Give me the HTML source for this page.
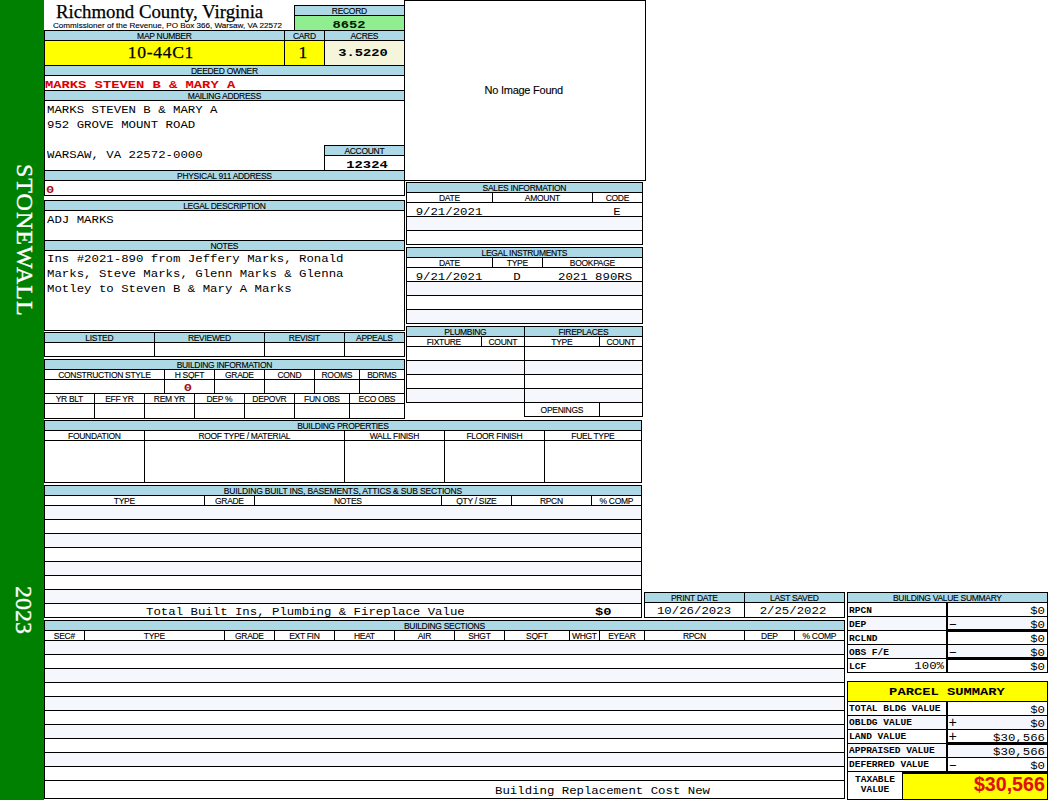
<!DOCTYPE html>
<html lang="en"><head><meta charset="utf-8"><title>Richmond County, Virginia - Property Card</title><style>
html,body{margin:0;padding:0;background:#fff;}
#p{position:relative;width:1050px;height:800px;overflow:hidden;background:#fff;}
.b,.f,.t{position:absolute;box-sizing:border-box;}
.b{border:1px solid #000;}
.t{white-space:pre;color:#000;}
.sans{font-family:"Liberation Sans",Arial,sans-serif;-webkit-text-stroke:0.12px currentColor;}
.serif{font-family:"Liberation Serif","Times New Roman",serif;-webkit-text-stroke:0.25px currentColor;}
.mono{font-family:"Liberation Mono","Courier New",monospace;}
.v{writing-mode:vertical-rl;font-family:"Liberation Serif","Times New Roman",serif;color:#fff;line-height:26px;width:26px;-webkit-text-stroke:0.35px #fff;}
</style></head><body><div id="p">
<div class="f" style="left:0px;top:0px;width:44px;height:800px;background:#008000;"></div>
<div class="b" style="left:404px;top:0px;width:242px;height:181px;background:#fff;"></div>
<div class="t sans" style="top:81.60px;line-height:16px;height:16px;font-size:11px;letter-spacing:-0.25px;left:423.90px;width:200px;text-align:center;text-indent:-0.25px;">No Image Found</div>
<div class="t serif" style="top:-1.50px;line-height:26px;height:26px;font-size:18.8px;left:56px;">Richmond County, Virginia</div>
<div class="t sans" style="top:19.00px;line-height:13px;height:13px;font-size:8.1px;left:53px;">Commissioner of the Revenue, PO Box 366, Warsaw, VA 22572</div>
<div class="b" style="left:294px;top:5px;width:111px;height:11px;background:#add8e6;"></div>
<div class="t sans" style="top:5.10px;line-height:13px;height:13px;font-size:8.5px;letter-spacing:-0.3px;left:284.50px;width:130px;text-align:center;text-indent:-0.3px;">RECORD</div>
<div class="b" style="left:294px;top:15px;width:111px;height:16px;background:#90ee90;"></div>
<div class="t mono" style="top:17.45px;line-height:17px;height:17px;font-size:11.8px;font-weight:bold;color:#001a00;transform:scaleX(1.1681);transform-origin:50% 0;left:299.00px;width:100px;text-align:center;">8652</div>
<div class="b" style="left:44px;top:30px;width:241px;height:11px;background:#add8e6;"></div>
<div class="t sans" style="top:30.10px;line-height:13px;height:13px;font-size:8.5px;letter-spacing:-0.3px;left:34.50px;width:260px;text-align:center;text-indent:-0.3px;">MAP NUMBER</div>
<div class="b" style="left:284px;top:30px;width:41px;height:11px;background:#add8e6;"></div>
<div class="t sans" style="top:30.10px;line-height:13px;height:13px;font-size:8.5px;letter-spacing:-0.3px;left:274.50px;width:60px;text-align:center;text-indent:-0.3px;">CARD</div>
<div class="b" style="left:324px;top:30px;width:81px;height:11px;background:#add8e6;"></div>
<div class="t sans" style="top:30.10px;line-height:13px;height:13px;font-size:8.5px;letter-spacing:-0.3px;left:314.50px;width:100px;text-align:center;text-indent:-0.3px;">ACRES</div>
<div class="b" style="left:44px;top:40px;width:241px;height:26px;background:#ffff00;"></div>
<div class="b" style="left:284px;top:40px;width:41px;height:26px;background:#ffff00;"></div>
<div class="b" style="left:324px;top:40px;width:81px;height:26px;background:#f5f5dc;"></div>
<div class="t serif" style="top:40.20px;line-height:25px;height:25px;font-size:17.6px;letter-spacing:0.65px;left:60.60px;width:200px;text-align:center;text-indent:0.65px;">10-44C1</div>
<div class="t serif" style="top:40.20px;line-height:25px;height:25px;font-size:17.6px;left:283.00px;width:40px;text-align:center;">1</div>
<div class="t mono" style="top:44.95px;line-height:17px;height:17px;font-size:11.8px;font-weight:bold;transform:scaleX(1.1681);transform-origin:50% 0;left:322.60px;width:80px;text-align:center;">3.5220</div>
<div class="b" style="left:44px;top:65px;width:361px;height:11px;background:#add8e6;"></div>
<div class="t sans" style="top:65.10px;line-height:13px;height:13px;font-size:8.5px;letter-spacing:-0.3px;left:34.50px;width:380px;text-align:center;text-indent:-0.3px;">DEEDED OWNER</div>
<div class="b" style="left:44px;top:75px;width:361px;height:16px;background:#fff;"></div>
<div class="t mono" style="top:77.25px;line-height:17px;height:17px;font-size:11.8px;font-weight:bold;color:#dd0000;transform:scaleX(1.1681);transform-origin:0 0;left:44.6px;">MARKS STEVEN B &amp; MARY A</div>
<div class="b" style="left:44px;top:90px;width:361px;height:11px;background:#add8e6;"></div>
<div class="t sans" style="top:90.10px;line-height:13px;height:13px;font-size:8.5px;letter-spacing:-0.3px;left:34.50px;width:380px;text-align:center;text-indent:-0.3px;">MAILING ADDRESS</div>
<div class="b" style="left:44px;top:100px;width:361px;height:71px;background:#fff;"></div>
<div class="t mono" style="top:101.50px;line-height:17px;height:17px;font-size:11.2px;transform:scaleX(1.1042);transform-origin:0 0;left:46.8px;">MARKS STEVEN B &amp; MARY A</div>
<div class="t mono" style="top:116.70px;line-height:17px;height:17px;font-size:11.2px;transform:scaleX(1.1042);transform-origin:0 0;left:46.8px;">952 GROVE MOUNT ROAD</div>
<div class="t mono" style="top:147.00px;line-height:17px;height:17px;font-size:11.2px;transform:scaleX(1.1042);transform-origin:0 0;left:46.8px;">WARSAW, VA 22572-0000</div>
<div class="b" style="left:324px;top:145px;width:81px;height:11px;background:#add8e6;"></div>
<div class="t sans" style="top:145.10px;line-height:13px;height:13px;font-size:8.5px;letter-spacing:-0.3px;left:314.50px;width:100px;text-align:center;text-indent:-0.3px;">ACCOUNT</div>
<div class="b" style="left:324px;top:155px;width:81px;height:16px;background:#fff;"></div>
<div class="t mono" style="top:157.15px;line-height:17px;height:17px;font-size:11.8px;font-weight:bold;transform:scaleX(1.1681);transform-origin:50% 0;left:327.40px;width:80px;text-align:center;">12324</div>
<div class="b" style="left:44px;top:170px;width:361px;height:11px;background:#add8e6;"></div>
<div class="t sans" style="top:170.10px;line-height:13px;height:13px;font-size:8.5px;letter-spacing:-0.3px;left:34.50px;width:380px;text-align:center;text-indent:-0.3px;">PHYSICAL 911 ADDRESS</div>
<div class="b" style="left:44px;top:180px;width:361px;height:16px;background:#fff;"></div>
<div class="t mono" style="top:182.15px;line-height:17px;height:17px;font-size:11.8px;font-weight:bold;color:#a81010;transform:scaleX(1.1681);transform-origin:0 0;left:46.3px;">0</div>
<div class="b" style="left:44px;top:200px;width:361px;height:11px;background:#add8e6;"></div>
<div class="t sans" style="top:200.10px;line-height:13px;height:13px;font-size:8.5px;letter-spacing:-0.3px;left:34.50px;width:380px;text-align:center;text-indent:-0.3px;">LEGAL DESCRIPTION</div>
<div class="b" style="left:44px;top:210px;width:361px;height:31px;background:#fff;"></div>
<div class="t mono" style="top:211.70px;line-height:17px;height:17px;font-size:11.2px;transform:scaleX(1.1042);transform-origin:0 0;left:46.8px;">ADJ MARKS</div>
<div class="b" style="left:44px;top:240px;width:361px;height:11px;background:#add8e6;"></div>
<div class="t sans" style="top:240.10px;line-height:13px;height:13px;font-size:8.5px;letter-spacing:-0.3px;left:34.50px;width:380px;text-align:center;text-indent:-0.3px;">NOTES</div>
<div class="b" style="left:44px;top:250px;width:361px;height:81px;background:#fff;"></div>
<div class="t mono" style="top:251.30px;line-height:17px;height:17px;font-size:11.2px;transform:scaleX(1.1042);transform-origin:0 0;left:46.8px;">Ins #2021-890 from Jeffery Marks, Ronald</div>
<div class="t mono" style="top:266.30px;line-height:17px;height:17px;font-size:11.2px;transform:scaleX(1.1042);transform-origin:0 0;left:46.8px;">Marks, Steve Marks, Glenn Marks &amp; Glenna</div>
<div class="t mono" style="top:281.30px;line-height:17px;height:17px;font-size:11.2px;transform:scaleX(1.1042);transform-origin:0 0;left:46.8px;">Motley to Steven B &amp; Mary A Marks</div>
<div class="b" style="left:44px;top:332px;width:111px;height:11px;background:#add8e6;"></div>
<div class="t sans" style="top:332.10px;line-height:13px;height:13px;font-size:8.5px;letter-spacing:-0.3px;left:34.50px;width:130px;text-align:center;text-indent:-0.3px;">LISTED</div>
<div class="b" style="left:44px;top:342px;width:111px;height:15px;background:#fff;"></div>
<div class="b" style="left:154px;top:332px;width:111px;height:11px;background:#add8e6;"></div>
<div class="t sans" style="top:332.10px;line-height:13px;height:13px;font-size:8.5px;letter-spacing:-0.3px;left:144.50px;width:130px;text-align:center;text-indent:-0.3px;">REVIEWED</div>
<div class="b" style="left:154px;top:342px;width:111px;height:15px;background:#fff;"></div>
<div class="b" style="left:264px;top:332px;width:81px;height:11px;background:#add8e6;"></div>
<div class="t sans" style="top:332.10px;line-height:13px;height:13px;font-size:8.5px;letter-spacing:-0.3px;left:254.50px;width:100px;text-align:center;text-indent:-0.3px;">REVISIT</div>
<div class="b" style="left:264px;top:342px;width:81px;height:15px;background:#fff;"></div>
<div class="b" style="left:344px;top:332px;width:61px;height:11px;background:#add8e6;"></div>
<div class="t sans" style="top:332.10px;line-height:13px;height:13px;font-size:8.5px;letter-spacing:-0.3px;left:334.50px;width:80px;text-align:center;text-indent:-0.3px;">APPEALS</div>
<div class="b" style="left:344px;top:342px;width:61px;height:15px;background:#fff;"></div>
<div class="b" style="left:44px;top:359px;width:361px;height:11px;background:#add8e6;"></div>
<div class="t sans" style="top:359.10px;line-height:13px;height:13px;font-size:8.5px;letter-spacing:-0.3px;left:34.50px;width:380px;text-align:center;text-indent:-0.3px;">BUILDING INFORMATION</div>
<div class="b" style="left:44px;top:369px;width:121px;height:11px;background:#fff;"></div>
<div class="t sans" style="top:369.10px;line-height:13px;height:13px;font-size:8.5px;letter-spacing:-0.3px;left:34.50px;width:140px;text-align:center;text-indent:-0.3px;">CONSTRUCTION STYLE</div>
<div class="b" style="left:44px;top:379px;width:121px;height:15px;background:#fff;"></div>
<div class="b" style="left:164px;top:369px;width:51px;height:11px;background:#fff;"></div>
<div class="t sans" style="top:369.10px;line-height:13px;height:13px;font-size:8.5px;letter-spacing:-0.3px;left:154.50px;width:70px;text-align:center;text-indent:-0.3px;">H SQFT</div>
<div class="b" style="left:164px;top:379px;width:51px;height:15px;background:#fff;"></div>
<div class="b" style="left:214px;top:369px;width:51px;height:11px;background:#fff;"></div>
<div class="t sans" style="top:369.10px;line-height:13px;height:13px;font-size:8.5px;letter-spacing:-0.3px;left:204.50px;width:70px;text-align:center;text-indent:-0.3px;">GRADE</div>
<div class="b" style="left:214px;top:379px;width:51px;height:15px;background:#fff;"></div>
<div class="b" style="left:264px;top:369px;width:51px;height:11px;background:#fff;"></div>
<div class="t sans" style="top:369.10px;line-height:13px;height:13px;font-size:8.5px;letter-spacing:-0.3px;left:254.50px;width:70px;text-align:center;text-indent:-0.3px;">COND</div>
<div class="b" style="left:264px;top:379px;width:51px;height:15px;background:#fff;"></div>
<div class="b" style="left:314px;top:369px;width:46px;height:11px;background:#fff;"></div>
<div class="t sans" style="top:369.10px;line-height:13px;height:13px;font-size:8.5px;letter-spacing:-0.3px;left:304.50px;width:65px;text-align:center;text-indent:-0.3px;">ROOMS</div>
<div class="b" style="left:314px;top:379px;width:46px;height:15px;background:#fff;"></div>
<div class="b" style="left:359px;top:369px;width:46px;height:11px;background:#fff;"></div>
<div class="t sans" style="top:369.10px;line-height:13px;height:13px;font-size:8.5px;letter-spacing:-0.3px;left:349.50px;width:65px;text-align:center;text-indent:-0.3px;">BDRMS</div>
<div class="b" style="left:359px;top:379px;width:46px;height:15px;background:#fff;"></div>
<div class="t mono" style="top:380.15px;line-height:17px;height:17px;font-size:11.8px;font-weight:bold;color:#a81010;transform:scaleX(1.1681);transform-origin:50% 0;left:168.20px;width:40px;text-align:center;">0</div>
<div class="b" style="left:44px;top:393px;width:51px;height:11px;background:#fff;"></div>
<div class="t sans" style="top:393.10px;line-height:13px;height:13px;font-size:8.5px;letter-spacing:-0.3px;left:34.50px;width:70px;text-align:center;text-indent:-0.3px;">YR BLT</div>
<div class="b" style="left:44px;top:403px;width:51px;height:16px;background:#fff;"></div>
<div class="b" style="left:94px;top:393px;width:51px;height:11px;background:#fff;"></div>
<div class="t sans" style="top:393.10px;line-height:13px;height:13px;font-size:8.5px;letter-spacing:-0.3px;left:84.50px;width:70px;text-align:center;text-indent:-0.3px;">EFF YR</div>
<div class="b" style="left:94px;top:403px;width:51px;height:16px;background:#fff;"></div>
<div class="b" style="left:144px;top:393px;width:51px;height:11px;background:#fff;"></div>
<div class="t sans" style="top:393.10px;line-height:13px;height:13px;font-size:8.5px;letter-spacing:-0.3px;left:134.50px;width:70px;text-align:center;text-indent:-0.3px;">REM YR</div>
<div class="b" style="left:144px;top:403px;width:51px;height:16px;background:#fff;"></div>
<div class="b" style="left:194px;top:393px;width:51px;height:11px;background:#fff;"></div>
<div class="t sans" style="top:393.10px;line-height:13px;height:13px;font-size:8.5px;letter-spacing:-0.3px;left:184.50px;width:70px;text-align:center;text-indent:-0.3px;">DEP %</div>
<div class="b" style="left:194px;top:403px;width:51px;height:16px;background:#fff;"></div>
<div class="b" style="left:244px;top:393px;width:51px;height:11px;background:#fff;"></div>
<div class="t sans" style="top:393.10px;line-height:13px;height:13px;font-size:8.5px;letter-spacing:-0.3px;left:234.50px;width:70px;text-align:center;text-indent:-0.3px;">DEPOVR</div>
<div class="b" style="left:244px;top:403px;width:51px;height:16px;background:#fff;"></div>
<div class="b" style="left:294px;top:393px;width:56px;height:11px;background:#fff;"></div>
<div class="t sans" style="top:393.10px;line-height:13px;height:13px;font-size:8.5px;letter-spacing:-0.3px;left:284.50px;width:75px;text-align:center;text-indent:-0.3px;">FUN OBS</div>
<div class="b" style="left:294px;top:403px;width:56px;height:16px;background:#fff;"></div>
<div class="b" style="left:349px;top:393px;width:56px;height:11px;background:#fff;"></div>
<div class="t sans" style="top:393.10px;line-height:13px;height:13px;font-size:8.5px;letter-spacing:-0.3px;left:339.50px;width:75px;text-align:center;text-indent:-0.3px;">ECO OBS</div>
<div class="b" style="left:349px;top:403px;width:56px;height:16px;background:#fff;"></div>
<div class="b" style="left:44px;top:420px;width:598px;height:11px;background:#add8e6;"></div>
<div class="t sans" style="top:420.10px;line-height:13px;height:13px;font-size:8.5px;letter-spacing:-0.3px;left:34.50px;width:617px;text-align:center;text-indent:-0.3px;">BUILDING PROPERTIES</div>
<div class="b" style="left:44px;top:430px;width:101px;height:11px;background:#fff;"></div>
<div class="t sans" style="top:430.10px;line-height:13px;height:13px;font-size:8.5px;letter-spacing:-0.3px;left:34.50px;width:120px;text-align:center;text-indent:-0.3px;">FOUNDATION</div>
<div class="b" style="left:44px;top:440px;width:101px;height:43px;background:#fff;"></div>
<div class="b" style="left:144px;top:430px;width:201px;height:11px;background:#fff;"></div>
<div class="t sans" style="top:430.10px;line-height:13px;height:13px;font-size:8.5px;letter-spacing:-0.3px;left:134.50px;width:220px;text-align:center;text-indent:-0.3px;">ROOF TYPE / MATERIAL</div>
<div class="b" style="left:144px;top:440px;width:201px;height:43px;background:#fff;"></div>
<div class="b" style="left:344px;top:430px;width:101px;height:11px;background:#fff;"></div>
<div class="t sans" style="top:430.10px;line-height:13px;height:13px;font-size:8.5px;letter-spacing:-0.3px;left:334.50px;width:120px;text-align:center;text-indent:-0.3px;">WALL FINISH</div>
<div class="b" style="left:344px;top:440px;width:101px;height:43px;background:#fff;"></div>
<div class="b" style="left:444px;top:430px;width:101px;height:11px;background:#fff;"></div>
<div class="t sans" style="top:430.10px;line-height:13px;height:13px;font-size:8.5px;letter-spacing:-0.3px;left:434.50px;width:120px;text-align:center;text-indent:-0.3px;">FLOOR FINISH</div>
<div class="b" style="left:444px;top:440px;width:101px;height:43px;background:#fff;"></div>
<div class="b" style="left:544px;top:430px;width:98px;height:11px;background:#fff;"></div>
<div class="t sans" style="top:430.10px;line-height:13px;height:13px;font-size:8.5px;letter-spacing:-0.3px;left:534.50px;width:117px;text-align:center;text-indent:-0.3px;">FUEL TYPE</div>
<div class="b" style="left:544px;top:440px;width:98px;height:43px;background:#fff;"></div>
<div class="b" style="left:44px;top:485px;width:598px;height:11px;background:#add8e6;"></div>
<div class="t sans" style="top:485.10px;line-height:13px;height:13px;font-size:8.5px;letter-spacing:-0.17px;left:34.50px;width:617px;text-align:center;text-indent:-0.17px;">BUILDING BUILT INS, BASEMENTS, ATTICS &amp; SUB SECTIONS</div>
<div class="b" style="left:44px;top:495px;width:161px;height:11px;background:#fff;"></div>
<div class="t sans" style="top:495.10px;line-height:13px;height:13px;font-size:8.5px;letter-spacing:-0.3px;left:34.50px;width:180px;text-align:center;text-indent:-0.3px;">TYPE</div>
<div class="b" style="left:204px;top:495px;width:51px;height:11px;background:#fff;"></div>
<div class="t sans" style="top:495.10px;line-height:13px;height:13px;font-size:8.5px;letter-spacing:-0.3px;left:194.50px;width:70px;text-align:center;text-indent:-0.3px;">GRADE</div>
<div class="b" style="left:254px;top:495px;width:188px;height:11px;background:#fff;"></div>
<div class="t sans" style="top:495.10px;line-height:13px;height:13px;font-size:8.5px;letter-spacing:-0.3px;left:244.50px;width:207px;text-align:center;text-indent:-0.3px;">NOTES</div>
<div class="b" style="left:441px;top:495px;width:71px;height:11px;background:#fff;"></div>
<div class="t sans" style="top:495.10px;line-height:13px;height:13px;font-size:8.5px;letter-spacing:-0.3px;left:431.50px;width:90px;text-align:center;text-indent:-0.3px;">QTY / SIZE</div>
<div class="b" style="left:511px;top:495px;width:81px;height:11px;background:#fff;"></div>
<div class="t sans" style="top:495.10px;line-height:13px;height:13px;font-size:8.5px;letter-spacing:-0.3px;left:501.50px;width:100px;text-align:center;text-indent:-0.3px;">RPCN</div>
<div class="b" style="left:591px;top:495px;width:51px;height:11px;background:#fff;"></div>
<div class="t sans" style="top:495.10px;line-height:13px;height:13px;font-size:8.5px;letter-spacing:-0.3px;left:581.50px;width:70px;text-align:center;text-indent:-0.3px;">% COMP</div>
<div class="b" style="left:44px;top:505px;width:598px;height:15px;background:#f6f6fd;"></div>
<div class="b" style="left:44px;top:519px;width:598px;height:15px;background:#fff;"></div>
<div class="b" style="left:44px;top:533px;width:598px;height:15px;background:#f6f6fd;"></div>
<div class="b" style="left:44px;top:547px;width:598px;height:15px;background:#fff;"></div>
<div class="b" style="left:44px;top:561px;width:598px;height:15px;background:#f6f6fd;"></div>
<div class="b" style="left:44px;top:575px;width:598px;height:15px;background:#fff;"></div>
<div class="b" style="left:44px;top:589px;width:598px;height:15px;background:#f6f6fd;"></div>
<div class="b" style="left:44px;top:603px;width:598px;height:15px;background:#fff;"></div>
<div class="t mono" style="top:603.50px;line-height:17px;height:17px;font-size:11.2px;transform:scaleX(1.1042);transform-origin:0 0;left:146px;">Total Built Ins, Plumbing &amp; Fireplace Value</div>
<div class="t mono" style="top:603.95px;line-height:17px;height:17px;font-size:11.8px;font-weight:bold;transform:scaleX(1.1681);transform-origin:0 0;left:595.4px;">$0</div>
<div class="b" style="left:44px;top:620px;width:801px;height:11px;background:#add8e6;"></div>
<div class="t sans" style="top:620.10px;line-height:13px;height:13px;font-size:8.5px;letter-spacing:-0.3px;left:34.50px;width:820px;text-align:center;text-indent:-0.3px;">BUILDING SECTIONS</div>
<div class="b" style="left:44px;top:630px;width:41px;height:11px;background:#fff;"></div>
<div class="t sans" style="top:630.10px;line-height:13px;height:13px;font-size:8.5px;letter-spacing:-0.3px;left:34.50px;width:60px;text-align:center;text-indent:-0.3px;">SEC#</div>
<div class="b" style="left:84px;top:630px;width:141px;height:11px;background:#fff;"></div>
<div class="t sans" style="top:630.10px;line-height:13px;height:13px;font-size:8.5px;letter-spacing:-0.3px;left:74.50px;width:160px;text-align:center;text-indent:-0.3px;">TYPE</div>
<div class="b" style="left:224px;top:630px;width:51px;height:11px;background:#fff;"></div>
<div class="t sans" style="top:630.10px;line-height:13px;height:13px;font-size:8.5px;letter-spacing:-0.3px;left:214.50px;width:70px;text-align:center;text-indent:-0.3px;">GRADE</div>
<div class="b" style="left:274px;top:630px;width:61px;height:11px;background:#fff;"></div>
<div class="t sans" style="top:630.10px;line-height:13px;height:13px;font-size:8.5px;letter-spacing:-0.3px;left:264.50px;width:80px;text-align:center;text-indent:-0.3px;">EXT FIN</div>
<div class="b" style="left:334px;top:630px;width:61px;height:11px;background:#fff;"></div>
<div class="t sans" style="top:630.10px;line-height:13px;height:13px;font-size:8.5px;letter-spacing:-0.3px;left:324.50px;width:80px;text-align:center;text-indent:-0.3px;">HEAT</div>
<div class="b" style="left:394px;top:630px;width:61px;height:11px;background:#fff;"></div>
<div class="t sans" style="top:630.10px;line-height:13px;height:13px;font-size:8.5px;letter-spacing:-0.3px;left:384.50px;width:80px;text-align:center;text-indent:-0.3px;">AIR</div>
<div class="b" style="left:454px;top:630px;width:51px;height:11px;background:#fff;"></div>
<div class="t sans" style="top:630.10px;line-height:13px;height:13px;font-size:8.5px;letter-spacing:-0.3px;left:444.50px;width:70px;text-align:center;text-indent:-0.3px;">SHGT</div>
<div class="b" style="left:504px;top:630px;width:66px;height:11px;background:#fff;"></div>
<div class="t sans" style="top:630.10px;line-height:13px;height:13px;font-size:8.5px;letter-spacing:-0.3px;left:494.50px;width:85px;text-align:center;text-indent:-0.3px;">SQFT</div>
<div class="b" style="left:569px;top:630px;width:31px;height:11px;background:#fff;"></div>
<div class="t sans" style="top:630.10px;line-height:13px;height:13px;font-size:8.5px;letter-spacing:-0.3px;left:559.50px;width:50px;text-align:center;text-indent:-0.3px;">WHGT</div>
<div class="b" style="left:599px;top:630px;width:46px;height:11px;background:#fff;"></div>
<div class="t sans" style="top:630.10px;line-height:13px;height:13px;font-size:8.5px;letter-spacing:-0.3px;left:589.50px;width:65px;text-align:center;text-indent:-0.3px;">EYEAR</div>
<div class="b" style="left:644px;top:630px;width:101px;height:11px;background:#fff;"></div>
<div class="t sans" style="top:630.10px;line-height:13px;height:13px;font-size:8.5px;letter-spacing:-0.3px;left:634.50px;width:120px;text-align:center;text-indent:-0.3px;">RPCN</div>
<div class="b" style="left:744px;top:630px;width:51px;height:11px;background:#fff;"></div>
<div class="t sans" style="top:630.10px;line-height:13px;height:13px;font-size:8.5px;letter-spacing:-0.3px;left:734.50px;width:70px;text-align:center;text-indent:-0.3px;">DEP</div>
<div class="b" style="left:794px;top:630px;width:51px;height:11px;background:#fff;"></div>
<div class="t sans" style="top:630.10px;line-height:13px;height:13px;font-size:8.5px;letter-spacing:-0.3px;left:784.50px;width:70px;text-align:center;text-indent:-0.3px;">% COMP</div>
<div class="b" style="left:44px;top:640px;width:801px;height:15px;background:#f6f6fd;"></div>
<div class="b" style="left:44px;top:654px;width:801px;height:15px;background:#fff;"></div>
<div class="b" style="left:44px;top:668px;width:801px;height:15px;background:#f6f6fd;"></div>
<div class="b" style="left:44px;top:682px;width:801px;height:15px;background:#fff;"></div>
<div class="b" style="left:44px;top:696px;width:801px;height:15px;background:#f6f6fd;"></div>
<div class="b" style="left:44px;top:710px;width:801px;height:15px;background:#fff;"></div>
<div class="b" style="left:44px;top:724px;width:801px;height:15px;background:#f6f6fd;"></div>
<div class="b" style="left:44px;top:738px;width:801px;height:15px;background:#fff;"></div>
<div class="b" style="left:44px;top:752px;width:801px;height:15px;background:#f6f6fd;"></div>
<div class="b" style="left:44px;top:766px;width:801px;height:15px;background:#fff;"></div>
<div class="b" style="left:44px;top:780px;width:801px;height:19px;background:#fff;"></div>
<div class="t mono" style="top:783.40px;line-height:17px;height:17px;font-size:11.2px;transform:scaleX(1.1042);transform-origin:0 0;left:495.2px;">Building Replacement Cost New</div>
<div class="b" style="left:406px;top:182px;width:237px;height:11px;background:#add8e6;"></div>
<div class="t sans" style="top:182.10px;line-height:13px;height:13px;font-size:8.5px;letter-spacing:-0.3px;left:396.50px;width:256px;text-align:center;text-indent:-0.3px;">SALES INFORMATION</div>
<div class="b" style="left:406px;top:192px;width:87px;height:11px;background:#fff;"></div>
<div class="t sans" style="top:192.10px;line-height:13px;height:13px;font-size:8.5px;letter-spacing:-0.3px;left:396.50px;width:106px;text-align:center;text-indent:-0.3px;">DATE</div>
<div class="b" style="left:492px;top:192px;width:101px;height:11px;background:#fff;"></div>
<div class="t sans" style="top:192.10px;line-height:13px;height:13px;font-size:8.5px;letter-spacing:-0.3px;left:482.50px;width:120px;text-align:center;text-indent:-0.3px;">AMOUNT</div>
<div class="b" style="left:592px;top:192px;width:51px;height:11px;background:#fff;"></div>
<div class="t sans" style="top:192.10px;line-height:13px;height:13px;font-size:8.5px;letter-spacing:-0.3px;left:582.50px;width:70px;text-align:center;text-indent:-0.3px;">CODE</div>
<div class="b" style="left:406px;top:202px;width:237px;height:15px;background:#fff;"></div>
<div class="b" style="left:406px;top:216px;width:237px;height:15px;background:#f6f6fd;"></div>
<div class="b" style="left:406px;top:230px;width:237px;height:15px;background:#fff;"></div>
<div class="t mono" style="top:203.70px;line-height:17px;height:17px;font-size:11.2px;transform:scaleX(1.1042);transform-origin:50% 0;left:406.00px;width:86px;text-align:center;">9/21/2021</div>
<div class="t mono" style="top:203.70px;line-height:17px;height:17px;font-size:11.2px;transform:scaleX(1.1042);transform-origin:50% 0;left:597.30px;width:40px;text-align:center;">E</div>
<div class="b" style="left:406px;top:247px;width:237px;height:11px;background:#add8e6;"></div>
<div class="t sans" style="top:247.10px;line-height:13px;height:13px;font-size:8.5px;letter-spacing:-0.3px;left:396.50px;width:256px;text-align:center;text-indent:-0.3px;">LEGAL INSTRUMENTS</div>
<div class="b" style="left:406px;top:257px;width:87px;height:11px;background:#fff;"></div>
<div class="t sans" style="top:257.10px;line-height:13px;height:13px;font-size:8.5px;letter-spacing:-0.3px;left:396.50px;width:106px;text-align:center;text-indent:-0.3px;">DATE</div>
<div class="b" style="left:492px;top:257px;width:51px;height:11px;background:#fff;"></div>
<div class="t sans" style="top:257.10px;line-height:13px;height:13px;font-size:8.5px;letter-spacing:-0.3px;left:482.50px;width:70px;text-align:center;text-indent:-0.3px;">TYPE</div>
<div class="b" style="left:542px;top:257px;width:101px;height:11px;background:#fff;"></div>
<div class="t sans" style="top:257.10px;line-height:13px;height:13px;font-size:8.5px;letter-spacing:-0.3px;left:532.50px;width:120px;text-align:center;text-indent:-0.3px;">BOOKPAGE</div>
<div class="b" style="left:406px;top:267px;width:237px;height:15px;background:#fff;"></div>
<div class="b" style="left:406px;top:281px;width:237px;height:15px;background:#f6f6fd;"></div>
<div class="b" style="left:406px;top:295px;width:237px;height:15px;background:#fff;"></div>
<div class="b" style="left:406px;top:309px;width:237px;height:15px;background:#f6f6fd;"></div>
<div class="t mono" style="top:268.70px;line-height:17px;height:17px;font-size:11.2px;transform:scaleX(1.1042);transform-origin:50% 0;left:406.00px;width:86px;text-align:center;">9/21/2021</div>
<div class="t mono" style="top:268.70px;line-height:17px;height:17px;font-size:11.2px;transform:scaleX(1.1042);transform-origin:50% 0;left:497.00px;width:40px;text-align:center;">D</div>
<div class="t mono" style="top:268.70px;line-height:17px;height:17px;font-size:11.2px;transform:scaleX(1.1042);transform-origin:0 0;left:558.2px;">2021 890RS</div>
<div class="b" style="left:406px;top:326px;width:119px;height:11px;background:#add8e6;"></div>
<div class="t sans" style="top:326.10px;line-height:13px;height:13px;font-size:8.5px;letter-spacing:-0.3px;left:396.50px;width:138px;text-align:center;text-indent:-0.3px;">PLUMBING</div>
<div class="b" style="left:524px;top:326px;width:119px;height:11px;background:#add8e6;"></div>
<div class="t sans" style="top:326.10px;line-height:13px;height:13px;font-size:8.5px;letter-spacing:-0.3px;left:514.50px;width:138px;text-align:center;text-indent:-0.3px;">FIREPLACES</div>
<div class="b" style="left:406px;top:336px;width:76px;height:11px;background:#fff;"></div>
<div class="t sans" style="top:336.10px;line-height:13px;height:13px;font-size:8.5px;letter-spacing:-0.3px;left:396.50px;width:95px;text-align:center;text-indent:-0.3px;">FIXTURE</div>
<div class="b" style="left:481px;top:336px;width:44px;height:11px;background:#fff;"></div>
<div class="t sans" style="top:336.10px;line-height:13px;height:13px;font-size:8.5px;letter-spacing:-0.3px;left:471.50px;width:63px;text-align:center;text-indent:-0.3px;">COUNT</div>
<div class="b" style="left:524px;top:336px;width:76px;height:11px;background:#fff;"></div>
<div class="t sans" style="top:336.10px;line-height:13px;height:13px;font-size:8.5px;letter-spacing:-0.3px;left:514.50px;width:95px;text-align:center;text-indent:-0.3px;">TYPE</div>
<div class="b" style="left:599px;top:336px;width:44px;height:11px;background:#fff;"></div>
<div class="t sans" style="top:336.10px;line-height:13px;height:13px;font-size:8.5px;letter-spacing:-0.3px;left:589.50px;width:63px;text-align:center;text-indent:-0.3px;">COUNT</div>
<div class="b" style="left:406px;top:346px;width:119px;height:15px;background:#fff;"></div>
<div class="b" style="left:524px;top:346px;width:119px;height:15px;background:#fff;"></div>
<div class="b" style="left:406px;top:360px;width:119px;height:15px;background:#f6f6fd;"></div>
<div class="b" style="left:524px;top:360px;width:119px;height:15px;background:#f6f6fd;"></div>
<div class="b" style="left:406px;top:374px;width:119px;height:15px;background:#fff;"></div>
<div class="b" style="left:524px;top:374px;width:119px;height:15px;background:#fff;"></div>
<div class="b" style="left:406px;top:388px;width:119px;height:15px;background:#f6f6fd;"></div>
<div class="b" style="left:524px;top:388px;width:119px;height:15px;background:#f6f6fd;"></div>
<div class="b" style="left:524px;top:402px;width:76px;height:15px;background:#fff;"></div>
<div class="t sans" style="top:404.10px;line-height:13px;height:13px;font-size:8.5px;letter-spacing:-0.3px;left:514.50px;width:95px;text-align:center;text-indent:-0.3px;">OPENINGS</div>
<div class="b" style="left:599px;top:402px;width:44px;height:15px;background:#fff;"></div>
<div class="b" style="left:644px;top:592px;width:101px;height:11px;background:#add8e6;"></div>
<div class="t sans" style="top:592.10px;line-height:13px;height:13px;font-size:8.5px;letter-spacing:-0.3px;left:634.50px;width:120px;text-align:center;text-indent:-0.3px;">PRINT DATE</div>
<div class="b" style="left:744px;top:592px;width:101px;height:11px;background:#add8e6;"></div>
<div class="t sans" style="top:592.10px;line-height:13px;height:13px;font-size:8.5px;letter-spacing:-0.3px;left:734.50px;width:120px;text-align:center;text-indent:-0.3px;">LAST SAVED</div>
<div class="b" style="left:644px;top:602px;width:101px;height:16px;background:#fff;"></div>
<div class="b" style="left:744px;top:602px;width:101px;height:16px;background:#fff;"></div>
<div class="t mono" style="top:603.00px;line-height:17px;height:17px;font-size:11.2px;transform:scaleX(1.1042);transform-origin:50% 0;left:644.30px;width:100px;text-align:center;">10/26/2023</div>
<div class="t mono" style="top:603.00px;line-height:17px;height:17px;font-size:11.2px;transform:scaleX(1.1042);transform-origin:50% 0;left:743.30px;width:100px;text-align:center;">2/25/2022</div>
<div class="b" style="left:847px;top:592px;width:201px;height:11px;background:#add8e6;"></div>
<div class="t sans" style="top:592.10px;line-height:13px;height:13px;font-size:8.5px;letter-spacing:-0.3px;left:837.50px;width:220px;text-align:center;text-indent:-0.3px;">BUILDING VALUE SUMMARY</div>
<div class="b" style="left:847px;top:602px;width:101px;height:15px;background:#fff;"></div>
<div class="b" style="left:947px;top:602px;width:101px;height:15px;background:#fff;"></div>
<div class="t mono" style="top:603.90px;line-height:14px;height:14px;font-size:8.9px;font-weight:bold;transform:scaleX(1.0730);transform-origin:0 0;left:849px;">RPCN</div>
<div class="t mono" style="top:603.30px;line-height:17px;height:17px;font-size:11.2px;transform:scaleX(1.1042);transform-origin:100% 0;left:955.00px;width:90px;text-align:right;">$0</div>
<div class="b" style="left:847px;top:616px;width:101px;height:15px;background:#f6f6fd;"></div>
<div class="b" style="left:947px;top:616px;width:101px;height:15px;background:#f6f6fd;"></div>
<div class="t mono" style="top:617.90px;line-height:14px;height:14px;font-size:8.9px;font-weight:bold;transform:scaleX(1.0730);transform-origin:0 0;left:849px;">DEP</div>
<div class="t mono" style="top:615.60px;line-height:19px;height:19px;font-size:13px;left:942.90px;width:20px;text-align:center;">−</div>
<div class="t mono" style="top:617.30px;line-height:17px;height:17px;font-size:11.2px;transform:scaleX(1.1042);transform-origin:100% 0;left:955.00px;width:90px;text-align:right;">$0</div>
<div class="b" style="left:847px;top:630px;width:101px;height:15px;background:#fff;"></div>
<div class="b" style="left:947px;top:630px;width:101px;height:15px;background:#fff;"></div>
<div class="t mono" style="top:631.90px;line-height:14px;height:14px;font-size:8.9px;font-weight:bold;transform:scaleX(1.0730);transform-origin:0 0;left:849px;">RCLND</div>
<div class="t mono" style="top:631.30px;line-height:17px;height:17px;font-size:11.2px;transform:scaleX(1.1042);transform-origin:100% 0;left:955.00px;width:90px;text-align:right;">$0</div>
<div class="b" style="left:847px;top:644px;width:101px;height:15px;background:#f6f6fd;"></div>
<div class="b" style="left:947px;top:644px;width:101px;height:15px;background:#f6f6fd;"></div>
<div class="t mono" style="top:645.90px;line-height:14px;height:14px;font-size:8.9px;font-weight:bold;transform:scaleX(1.0730);transform-origin:0 0;left:849px;">OBS F/E</div>
<div class="t mono" style="top:643.60px;line-height:19px;height:19px;font-size:13px;left:942.90px;width:20px;text-align:center;">−</div>
<div class="t mono" style="top:645.30px;line-height:17px;height:17px;font-size:11.2px;transform:scaleX(1.1042);transform-origin:100% 0;left:955.00px;width:90px;text-align:right;">$0</div>
<div class="b" style="left:847px;top:658px;width:101px;height:15px;background:#fff;"></div>
<div class="b" style="left:947px;top:658px;width:101px;height:15px;background:#fff;"></div>
<div class="t mono" style="top:659.90px;line-height:14px;height:14px;font-size:8.9px;font-weight:bold;transform:scaleX(1.0730);transform-origin:0 0;left:849px;">LCF</div>
<div class="t mono" style="top:659.30px;line-height:17px;height:17px;font-size:11.2px;transform:scaleX(1.1042);transform-origin:100% 0;left:955.00px;width:90px;text-align:right;">$0</div>
<div class="f" style="left:946px;top:602px;width:2px;height:71px;background:#000"></div>
<div class="f" style="left:947px;top:629px;width:101px;height:3px;background:#000"></div>
<div class="f" style="left:947px;top:657px;width:101px;height:3px;background:#000"></div>
<div class="t mono" style="top:658.40px;line-height:17px;height:17px;font-size:11.2px;transform:scaleX(1.1042);transform-origin:100% 0;left:884.40px;width:60px;text-align:right;">100%</div>
<div class="b" style="left:847px;top:681px;width:201px;height:21px;background:#ffff00;"></div>
<div class="t mono" style="top:684.15px;line-height:17px;height:17px;font-size:11.8px;font-weight:bold;transform:scaleX(1.1681);transform-origin:50% 0;left:847.00px;width:200px;text-align:center;">PARCEL SUMMARY</div>
<div class="b" style="left:847px;top:701px;width:101px;height:15px;background:#fff;"></div>
<div class="b" style="left:947px;top:701px;width:101px;height:15px;background:#fff;"></div>
<div class="t mono" style="top:702.10px;line-height:14px;height:14px;font-size:8.9px;font-weight:bold;transform:scaleX(1.0730);transform-origin:0 0;left:849px;">TOTAL BLDG VALUE</div>
<div class="t mono" style="top:702.30px;line-height:17px;height:17px;font-size:11.2px;transform:scaleX(1.1042);transform-origin:100% 0;left:955.00px;width:90px;text-align:right;">$0</div>
<div class="b" style="left:847px;top:715px;width:101px;height:15px;background:#f6f6fd;"></div>
<div class="b" style="left:947px;top:715px;width:101px;height:15px;background:#f6f6fd;"></div>
<div class="t mono" style="top:716.10px;line-height:14px;height:14px;font-size:8.9px;font-weight:bold;transform:scaleX(1.0730);transform-origin:0 0;left:849px;">OBLDG VALUE</div>
<div class="t mono" style="top:712.60px;line-height:20px;height:20px;font-size:14px;left:942.60px;width:20px;text-align:center;">+</div>
<div class="t mono" style="top:716.30px;line-height:17px;height:17px;font-size:11.2px;transform:scaleX(1.1042);transform-origin:100% 0;left:955.00px;width:90px;text-align:right;">$0</div>
<div class="b" style="left:847px;top:729px;width:101px;height:15px;background:#fff;"></div>
<div class="b" style="left:947px;top:729px;width:101px;height:15px;background:#fff;"></div>
<div class="t mono" style="top:730.10px;line-height:14px;height:14px;font-size:8.9px;font-weight:bold;transform:scaleX(1.0730);transform-origin:0 0;left:849px;">LAND VALUE</div>
<div class="t mono" style="top:726.60px;line-height:20px;height:20px;font-size:14px;left:942.60px;width:20px;text-align:center;">+</div>
<div class="t mono" style="top:730.30px;line-height:17px;height:17px;font-size:11.2px;transform:scaleX(1.1042);transform-origin:100% 0;left:955.00px;width:90px;text-align:right;">$30,566</div>
<div class="b" style="left:847px;top:743px;width:101px;height:15px;background:#f6f6fd;"></div>
<div class="b" style="left:947px;top:743px;width:101px;height:15px;background:#f6f6fd;"></div>
<div class="t mono" style="top:744.10px;line-height:14px;height:14px;font-size:8.9px;font-weight:bold;transform:scaleX(1.0730);transform-origin:0 0;left:849px;">APPRAISED VALUE</div>
<div class="t mono" style="top:744.30px;line-height:17px;height:17px;font-size:11.2px;transform:scaleX(1.1042);transform-origin:100% 0;left:955.00px;width:90px;text-align:right;">$30,566</div>
<div class="b" style="left:847px;top:757px;width:101px;height:15px;background:#fff;"></div>
<div class="b" style="left:947px;top:757px;width:101px;height:15px;background:#fff;"></div>
<div class="t mono" style="top:758.10px;line-height:14px;height:14px;font-size:8.9px;font-weight:bold;transform:scaleX(1.0730);transform-origin:0 0;left:849px;">DEFERRED VALUE</div>
<div class="t mono" style="top:756.60px;line-height:19px;height:19px;font-size:13px;left:942.90px;width:20px;text-align:center;">−</div>
<div class="t mono" style="top:758.30px;line-height:17px;height:17px;font-size:11.2px;transform:scaleX(1.1042);transform-origin:100% 0;left:955.00px;width:90px;text-align:right;">$0</div>
<div class="f" style="left:946px;top:701px;width:2px;height:71px;background:#000"></div>
<div class="f" style="left:947px;top:742px;width:101px;height:3px;background:#000"></div>
<div class="b" style="left:847px;top:771px;width:56px;height:29px;background:#fff;"></div>
<div class="b" style="left:902px;top:771px;width:146px;height:29px;background:#ffff00;"></div>
<div class="f" style="left:902px;top:771px;width:146px;height:3px;background:#000"></div>
<div class="t mono" style="top:773.30px;line-height:14px;height:14px;font-size:8.9px;font-weight:bold;transform:scaleX(1.0730);transform-origin:50% 0;left:846.50px;width:56px;text-align:center;">TAXABLE</div>
<div class="t mono" style="top:782.80px;line-height:14px;height:14px;font-size:8.9px;font-weight:bold;transform:scaleX(1.0730);transform-origin:50% 0;left:846.50px;width:56px;text-align:center;">VALUE</div>
<div class="t sans" style="top:770.70px;line-height:27px;height:27px;font-size:19.6px;font-weight:bold;color:#e01010;left:904.80px;width:140px;text-align:right;">$30,566</div>
<div class="t v" style="left:12px;top:164px;font-size:24px;letter-spacing:1.0px;">STONEWALL</div>
<div class="t v" style="left:10.9px;top:586px;font-size:24px;">2023</div>
</div></body></html>
